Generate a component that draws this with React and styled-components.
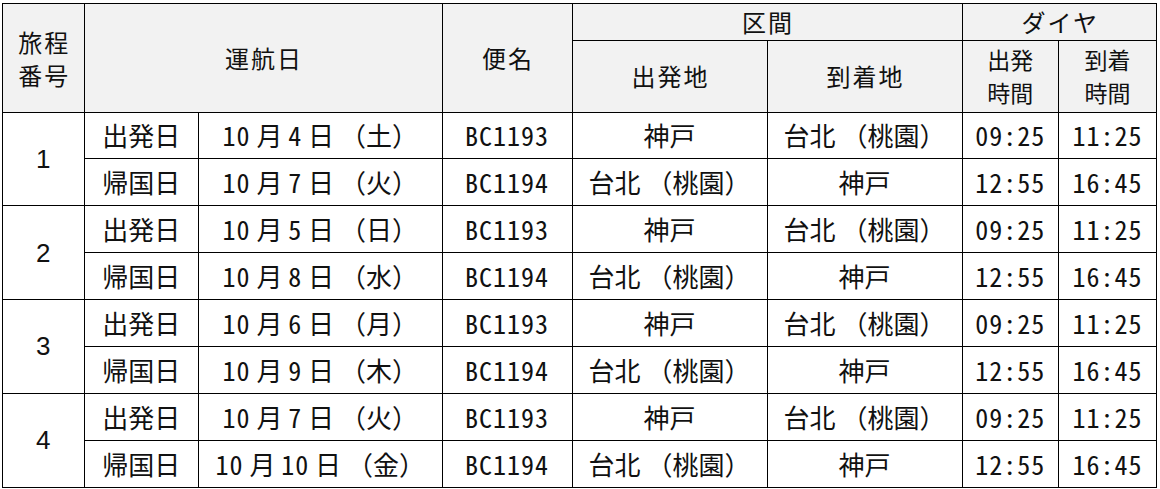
import React from 'react';
import styled, { createGlobalStyle } from 'styled-components';

const GlobalStyle = createGlobalStyle`
  html, body {
    margin: 0;
    padding: 0;
    background: #ffffff;
  }
`;

const itineraries = [
  { no: 1, out: '10 月 4 日 （土）', back: '10 月 7 日 （火）' },
  { no: 2, out: '10 月 5 日 （日）', back: '10 月 8 日 （水）' },
  { no: 3, out: '10 月 6 日 （月）', back: '10 月 9 日 （木）' },
  { no: 4, out: '10 月 7 日 （火）', back: '10 月 10 日 （金）' },
];

const colWidths = [81.5, 114.5, 243.5, 130, 195, 195, 96.5, 98];

// half-width digits/latin like a gothic font; spaces and full-width parens untouched
const Mixed = ({ text }) =>
  text.split(/([0-9A-Za-z:]+)/).map((part, i) =>
    /^[0-9A-Za-z:]+$/.test(part) ? <Half key={i}>{part}</Half> : part
  );

const App = () => {
  return (
    <>
      <GlobalStyle />
      <Page>
        <Table>
          <colgroup>
            {colWidths.map((w, i) => (
              <col key={i} style={{ width: `${w}px` }} />
            ))}
          </colgroup>
          <thead>
            <HeadRow height={36.5}>
              <HeadCell rowSpan={2} $lh={33}>
                旅程<br />番号
              </HeadCell>
              <HeadCell rowSpan={2} colSpan={2}>運航日</HeadCell>
              <HeadCell rowSpan={2}>便名</HeadCell>
              <HeadCell colSpan={2}>区間</HeadCell>
              <HeadCell colSpan={2}>ダイヤ</HeadCell>
            </HeadRow>
            <HeadRow height={72}>
              <HeadCell>出発地</HeadCell>
              <HeadCell>到着地</HeadCell>
              <HeadCell $small $lh={33}>出発<br />時間</HeadCell>
              <HeadCell $small $lh={33}>到着<br />時間</HeadCell>
            </HeadRow>
          </thead>
          <tbody>
            {itineraries.map((it) => (
              <React.Fragment key={it.no}>
                <BodyRow>
                  <NumberCell rowSpan={2}>{it.no}</NumberCell>
                  <Cell>出発日</Cell>
                  <Cell><Mixed text={it.out} /></Cell>
                  <Cell><Mixed text="BC1193" /></Cell>
                  <Cell>神戸</Cell>
                  <Cell><Mixed text="台北 （桃園）" /></Cell>
                  <Cell><Mixed text="09:25" /></Cell>
                  <Cell><Mixed text="11:25" /></Cell>
                </BodyRow>
                <BodyRow>
                  <Cell>帰国日</Cell>
                  <Cell><Mixed text={it.back} /></Cell>
                  <Cell><Mixed text="BC1194" /></Cell>
                  <Cell><Mixed text="台北 （桃園）" /></Cell>
                  <Cell>神戸</Cell>
                  <Cell><Mixed text="12:55" /></Cell>
                  <Cell><Mixed text="16:45" /></Cell>
                </BodyRow>
              </React.Fragment>
            ))}
          </tbody>
        </Table>
      </Page>
    </>
  );
};

const Page = styled.div`
  padding: 3px 0 0 2px;
`;

const Table = styled.table`
  width: 1154px;
  table-layout: fixed;
  border-collapse: collapse;
  font-family: "Noto Sans CJK JP", "Liberation Sans", sans-serif;
  color: #111;
`;

const HeadRow = styled.tr`
  height: ${(p) => p.height}px;
`;

const HeadCell = styled.th`
  border: 1px solid #000;
  background: #f2f2f2;
  font-weight: 400;
  font-size: ${(p) => (p.$small ? '23px' : '24px')};
  letter-spacing: ${(p) => (p.$small ? '0' : '2px')};
  line-height: ${(p) => (p.$lh ? `${p.$lh}px` : '28px')};
  text-align: center;
  vertical-align: middle;
  padding: 0 0 0 ${(p) => (p.$small ? '0' : '2px')};
`;

const BodyRow = styled.tr`
  height: 46.875px;
`;

const Cell = styled.td`
  border: 1px solid #000;
  font-size: 26px;
  font-weight: 400;
  line-height: 30px;
  text-align: center;
  vertical-align: middle;
  padding: 0;
  white-space: nowrap;
`;

const Half = styled.span`
  font-feature-settings: "hwid";
  letter-spacing: 1px;
`;

const NumberCell = styled(Cell)`
  font-family: "Liberation Sans", Arial, sans-serif;
`;

export default App;
